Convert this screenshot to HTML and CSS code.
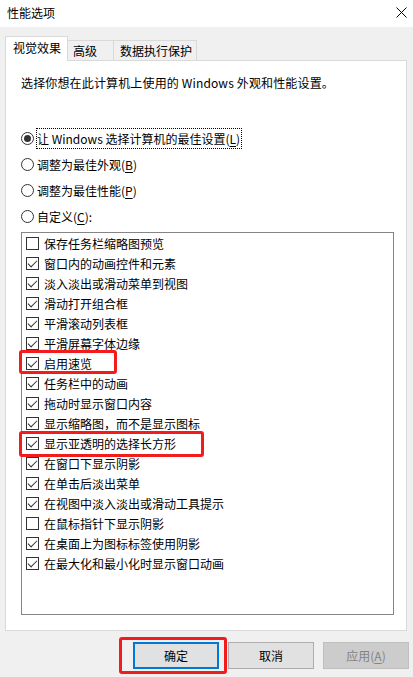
FILE: index.html
```html
<!DOCTYPE html>
<html lang="zh-CN">
<head>
    <meta charset="UTF-8">
    <meta name="viewport" content="width=device-width, initial-scale=1.0">
    <link rel="stylesheet" href="styles.css">
    <title>性能选项</title>
</head>
<body>
    <header class="titulo">
        <span>性能选项</span>
        <svg class="cerrar" width="11" height="11" viewBox="0 0 11 11"><path d="M0.5 0.5L10.5 10.5M10.5 0.5L0.5 10.5" stroke="#000" stroke-width="1" fill="none"/></svg>
    </header>
    <nav class="pestanas">
        <div class="pestana activa">视觉效果</div>
        <div class="pestana">高级</div>
        <div class="pestana">数据执行保护</div>
    </nav>
    <main class="panel">
        <p class="intro">选择你想在此计算机上使用的 Windows 外观和性能设置。</p>
        <div class="radios">
            <div class="radio marcado"><span class="circulo"></span><span class="foco">让 Windows 选择计算机的最佳设置(<u>L</u>)</span></div>
            <div class="radio"><span class="circulo"></span><span>调整为最佳外观(<u>B</u>)</span></div>
            <div class="radio"><span class="circulo"></span><span>调整为最佳性能(<u>P</u>)</span></div>
            <div class="radio"><span class="circulo"></span><span>自定义(<u>C</u>):</span></div>
        </div>
        <div class="lista">
            <div class="item"><span class="caja"></span>保存任务栏缩略图预览</div>
            <div class="item si"><span class="caja"></span>窗口内的动画控件和元素</div>
            <div class="item si"><span class="caja"></span>淡入淡出或滑动菜单到视图</div>
            <div class="item si"><span class="caja"></span>滑动打开组合框</div>
            <div class="item si"><span class="caja"></span>平滑滚动列表框</div>
            <div class="item si"><span class="caja"></span>平滑屏幕字体边缘</div>
            <div class="item si"><span class="caja"></span>启用速览<span class="marca m1"></span></div>
            <div class="item si"><span class="caja"></span>任务栏中的动画</div>
            <div class="item si"><span class="caja"></span>拖动时显示窗口内容</div>
            <div class="item si"><span class="caja"></span>显示缩略图，而不是显示图标</div>
            <div class="item si"><span class="caja"></span>显示亚透明的选择长方形<span class="marca m2"></span></div>
            <div class="item si"><span class="caja"></span>在窗口下显示阴影</div>
            <div class="item si"><span class="caja"></span>在单击后淡出菜单</div>
            <div class="item si"><span class="caja"></span>在视图中淡入淡出或滑动工具提示</div>
            <div class="item"><span class="caja"></span>在鼠标指针下显示阴影</div>
            <div class="item si"><span class="caja"></span>在桌面上为图标标签使用阴影</div>
            <div class="item si"><span class="caja"></span>在最大化和最小化时显示窗口动画</div>
        </div>
    </main>
    <footer class="botones">
        <button class="boton ok">确定<span class="marca m3"></span></button>
        <button class="boton">取消</button>
        <button class="boton apagado">应用(<u>A</u>)</button>
    </footer>
</body>
</html>
```
FILE: styles.css
```css
*{
    margin: 0;
    padding: 0;
    box-sizing: border-box;
    font-family: "Noto Sans CJK SC", "Noto Sans", sans-serif;
    font-size: 12px;
}
body{
    width: 413px;
    height: 677px;
    background-color: #f0f0f0;
    color: #000;
    overflow: hidden;
}
u{
    text-decoration: underline;
    text-underline-offset: 2px;
}
.titulo{
    height: 27px;
    background-color: #fff;
    display: flex;
    align-items: center;
    justify-content: space-between;
    padding: 0 6px 3px 7px;
}
.pestanas{
    display: flex;
    align-items: flex-end;
    height: 25px;
    margin: 9px 0 -1px 5px;
    position: relative;
    z-index: 1;
}
.pestana{
    height: 20px;
    margin-bottom: 1px;
    padding: 0 0 0 5px;
    line-height: 19px;
    white-space: nowrap;
    border: 1px solid #d9d9d9;
    border-bottom: none;
    border-left: none;
    background-color: #f0f0f0;
}
.pestana:nth-child(2){
    width: 46px;
}
.pestana:nth-child(3){
    width: 83px;
    padding-left: 6px;
}
.pestana.activa{
    width: 63px;
    height: 25px;
    margin-bottom: 0;
    padding-left: 7px;
    line-height: 21px;
    border-left: 1px solid #d9d9d9;
    background-color: #fff;
}
.panel{
    height: 571px;
    margin: 0 6px 0 5px;
    background-color: #fff;
    border: 1px solid #d9d9d9;
    padding: 14px 0 0 15px;
}
.intro{
    line-height: 16px;
    letter-spacing: 0.15px;
}
.radios{
    margin-top: 34px;
}
.radio{
    height: 26px;
    display: flex;
    align-items: center;
}
.circulo{
    width: 13px;
    height: 13px;
    border: 1px solid #333;
    border-radius: 50%;
    margin-right: 3px;
    display: flex;
    align-items: center;
    justify-content: center;
}
.marcado .circulo::after{
    content: "";
    width: 7px;
    height: 7px;
    border-radius: 50%;
    background-color: #333;
}
.foco{
    outline: 1px dotted #000;
    padding: 1px 1px 1px 0;
    line-height: 17px;
}
.lista{
    width: 373px;
    height: 383px;
    margin-top: 3px;
    border: 1px solid #858585;
    padding-left: 4px;
}
.item{
    height: 20px;
    display: flex;
    align-items: center;
    position: relative;
}
.caja{
    width: 13px;
    height: 13px;
    border: 1px solid #333;
    margin-right: 5px;
    background-color: #fff;
    display: flex;
    align-items: center;
    justify-content: center;
}
.si .caja::after{
    content: "";
    width: 8px;
    height: 4px;
    border-left: 1px solid #333;
    border-bottom: 1px solid #333;
    transform: translateY(-1px) rotate(-45deg);
}
.marca{
    position: absolute;
    border: 3px solid #f21c1c;
    border-radius: 3px;
    pointer-events: none;
}
.m1{
    left: -7px;
    top: -3px;
    width: 98px;
    height: 24px;
}
.m2{
    left: -7px;
    top: -2px;
    width: 185px;
    height: 26px;
}
.botones{
    display: flex;
    justify-content: flex-end;
    gap: 9px;
    margin: 11px 4px 0 0;
}
.boton{
    width: 86px;
    height: 27px;
    background-color: #e1e1e1;
    border: 1px solid #adadad;
    color: #000;
    position: relative;
}
.ok{
    border: 2px solid #0078d7;
}
.apagado{
    background-color: #cccccc;
    border-color: #bfbfbf;
    color: #838383;
}
.m3{
    left: -16px;
    top: -7px;
    width: 108px;
    height: 37px;
}
```
